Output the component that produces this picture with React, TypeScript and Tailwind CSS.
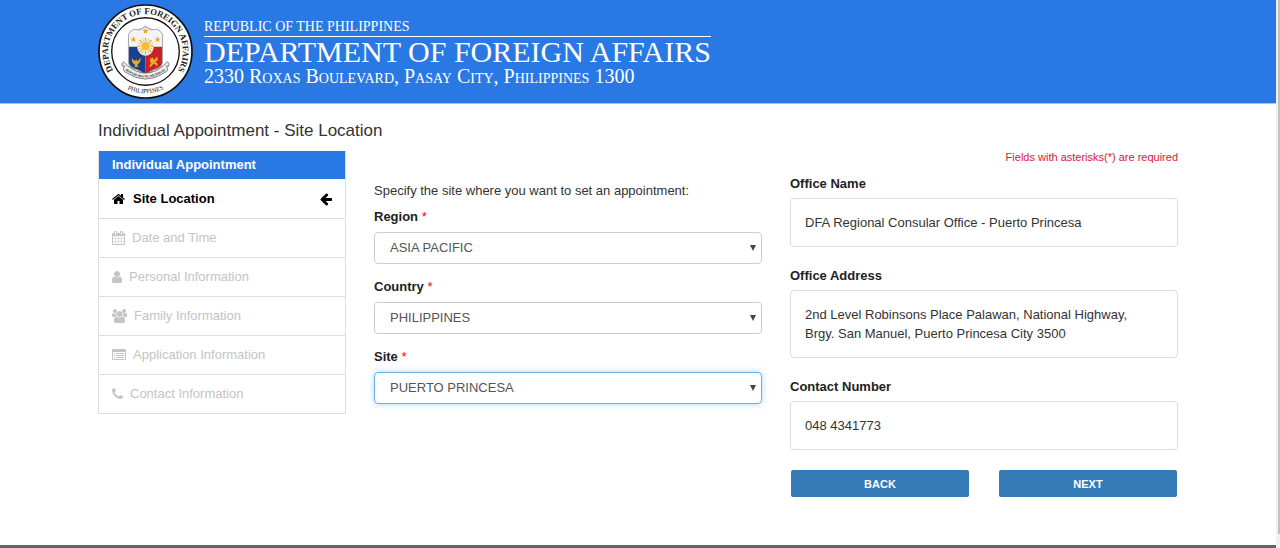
import { useState, type ReactNode } from "react";

type IconProps = { name: keyof typeof glyphs; className?: string };

/* Glyphs on a 1792-unit em: [left, advance width, path] */
const glyphs = {
  home: [64, 1664, "M1472 992v480q0 26-19 45t-45 19h-384v-384h-256v384h-384q-26 0-45-19t-19-45v-480q0-1 .5-3t.5-3l575-474 575 474q1 2 1 6zm223-69l-62 74q-8 9-21 11h-3q-13 0-21-7l-692-577-692 577q-12 8-24 7-13-2-21-11l-62-74q-8-10-7-23.5t11-21.5l719-599q32-26 76-26t76 26l244 204v-195q0-14 9-23t23-9h192q14 0 23 9t9 23v408l219 182q10 8 11 21.5t-7 23.5z"],
  calendar: [64, 1664, "M192 1664h288v-288h-288v288zm352 0h320v-288h-320v288zm-352-352h288v-320h-288v320zm352 0h320v-320h-320v320zm-352-384h288v-288h-288v288zm736 736h320v-288h-320v288zm-384-736h320v-288h-320v288zm768 736h288v-288h-288v288zm-384-352h320v-320h-320v320zm-352-864v-288q0-13-9.5-22.5t-22.5-9.5h-64q-13 0-22.5 9.5t-9.5 22.5v288q0 13 9.5 22.5t22.5 9.5h64q13 0 22.5-9.5t9.5-22.5zm736 864h288v-320h-288v320zm-384-384h320v-288h-320v288zm384 0h288v-288h-288v288zm32-480v-288q0-13-9.5-22.5t-22.5-9.5h-64q-13 0-22.5 9.5t-9.5 22.5v288q0 13 9.5 22.5t22.5 9.5h64q13 0 22.5-9.5t9.5-22.5zm384-64v1280q0 52-38 90t-90 38h-1408q-52 0-90-38t-38-90v-1280q0-52 38-90t90-38h128v-96q0-66 47-113t113-47h64q66 0 113 47t47 113v96h384v-96q0-66 47-113t113-47h64q66 0 113 47t47 113v96h128q52 0 90 38t38 90z"],
  user: [256, 1280, "M1536 1399q0 109-62.5 187t-150.5 78h-854q-88 0-150.5-78t-62.5-187q0-85 8.5-160.5t31.5-152 58.5-131 94-89 134.5-34.5q131 128 313 128t313-128q76 0 134.5 34.5t94 89 58.5 131 31.5 152 8.5 160.5zm-256-887q0 159-112.5 271.5t-271.5 112.5-271.5-112.5-112.5-271.5 112.5-271.5 271.5-112.5 271.5 112.5 112.5 271.5z"],
  users: [-64, 1920, "M529 896q-162 5-265 128h-134q-82 0-138-40.5t-56-118.5q0-353 124-353 6 0 43.5 21t97.5 42.5 119 21.5q67 0 133-23-5 37-5 66 0 159 93 293zm1071 637q0 120-73 189.5t-194 69.5h-874q-121 0-194-69.5t-73-189.5q0-53 3.5-103.5t14-109 26.5-108.5 43-97.5 62-81 85.5-53.5 111.5-20q10 0 43 21.5t73 48 107 48 135 21.5 135-21.5 107-48 73-48 43-21.5q61 0 111.5 20t85.5 53.5 62 81 43 97.5 26.5 108.5 14 109 3.5 103.5zm-1024-1277q0 106-75 181t-181 75-181-75-75-181 75-181 181-75 181 75 75 181zm704 384q0 159-112.5 271.5t-271.5 112.5-271.5-112.5-112.5-271.5 112.5-271.5 271.5-112.5 271.5 112.5 112.5 271.5zm576 225q0 78-56 118.5t-138 40.5h-134q-103-123-265-128 93-134 93-293 0-29-5-66 66 23 133 23 59 0 119-21.5t97.5-42.5 43.5-21q124 0 124 353zm-128-609q0 106-75 181t-181 75-181-75-75-181 75-181 181-75 181 75 75 181z"],
  list: [0, 1792, "M256 1152h128v128h-128zM256 896h128v128h-128zM256 640h128v128h-128zM512 1152h1024v128h-1024zM512 896h1024v128h-1024zM512 640h1024v128h-1024zM1664 1376v-832q0-13-9.5-22.5t-22.5-9.5h-1472q-13 0-22.5 9.5t-9.5 22.5v832q0 13 9.5 22.5t22.5 9.5h1472q13 0 22.5-9.5t9.5-22.5zm128-1088v1088q0 66-47 113t-113 47h-1472q-66 0-113-47t-47-113v-1088q0-66 47-113t113-47h1472q66 0 113 47t47 113z"],
  phone: [192, 1408, "M1600 1240q0 27-10 70.5t-21 68.5q-21 50-122 106-94 51-186 51-27 0-53-3.5t-57.5-12.5-47-14.5-55.5-20.5-49-18q-98-35-175-83-127-79-264-216t-216-264q-48-77-83-175-3-9-18-49t-20.5-55.5-14.5-47-12.5-57.5-3.5-53q0-92 51-186 56-101 106-122 25-11 68.5-21t70.5-10q14 0 21 3 18 6 53 76 11 19 30 54t35 63.5 31 53.5q3 4 17.5 25t21.5 35.5 7 28.5q0 20-28.5 50t-62 55-62 53-28.5 46q0 9 5 22.5t8.5 20.5 14 24 11.5 19q76 137 174 235t235 174q2 1 19 11.5t24 14 20.5 8.5 22.5 5q18 0 46-28.5t53-62 55-62 50-28.5q14 0 28.5 7t35.5 21.5 25 17.5q25 15 53.5 31t63.5 35 54 30q70 35 76 53 3 7 3 21z"],
  arrow: [128, 1600, "M1664 896v128q0 53-32.5 90.5t-84.5 37.5h-704l293 294q38 36 38 90t-38 90l-75 76q-37 37-90 37-52 0-91-37l-651-652q-37-37-37-90 0-52 37-91l651-650q38-38 91-38 52 0 90 38l75 74q38 38 38 91t-38 91l-293 293h704q52 0 84.5 37.5t32.5 90.5z"],
} as const;

function Icon({ name, className = "" }: IconProps) {
  const [left, width, path] = glyphs[name];
  return (
    <svg aria-hidden="true" viewBox={`${left} 0 ${width} 1792`} className={`h-3.5 w-auto shrink-0 fill-current ${className}`}>
      <path d={path} />
    </svg>
  );
}

const STAR = "M0-10 2.4-3.2 9.5-3.1 3.8 1.2 5.9 8.1 0 4-5.9 8.1-3.8 1.2-9.5-3.1-2.4-3.2z";

function Seal() {
  return (
    <svg role="img" aria-label="Seal" viewBox="0 0 284 284" className="size-[95px] shrink-0">
      <defs>
        <path id="seal-top" d="M45.2 197.9A111.8 111.8 0 1 1 238.8 197.9" />
        <path id="seal-bottom" d="M46 222A125 125 0 0 0 238 222" />
        <path id="seal-ribbon" d="M76 194Q142 246 208 194" />
        <clipPath id="shield">
          <path d="M142 66Q158 82 176 75Q190 82 193 92V172Q193 186 178 193Q152 202 142 214Q132 202 106 193Q91 186 91 172V92Q94 82 108 75Q126 82 142 66Z" />
        </clipPath>
      </defs>
      <circle cx="142" cy="142" r="139" fill="#fff" stroke="#111" strokeWidth="5" />
      <circle cx="142" cy="142" r="101" fill="#fff" stroke="#111" strokeWidth="4" />
      <g clipPath="url(#shield)">
        <path fill="#f4f4f6" d="M90 60h104v160H90z" />
        <path fill="#193f91" d="M90 128h52v92H90z" />
        <path fill="#cb2028" d="M142 128h52v92h-52z" />
        <ellipse cx="142" cy="126" rx="25" ry="29" fill="#f4f4f6" />
      </g>
      <path fill="none" stroke="#aaa" strokeWidth="3" d="M142 66Q158 82 176 75Q190 82 193 92V172Q193 186 178 193Q152 202 142 214Q132 202 106 193Q91 186 91 172V92Q94 82 108 75Q126 82 142 66Z" />
      <g stroke="#e9aa20" strokeWidth="4">
        <path d="M142 101v50M117 126h50M124 108l36 36M160 108l-36 36" />
        <path strokeWidth="2" d="M132 103l20 46M152 103l-20 46M119 116l46 20M119 136l46-20" />
      </g>
      <circle cx="142" cy="126" r="14" fill="#f2bd32" stroke="#fff" strokeWidth="2" />
      <g fill="#e9aa20">
        <path d={STAR} transform="translate(142 81)" />
        <path d={STAR} transform="translate(106 106)" />
        <path d={STAR} transform="translate(178 106)" />
        <path d="M101 162q-1 14 8 18l3 5-6 3h16l-5-4 3-5q8-5 7-18l-7 9-3 1-2-6-4 5-3-1z" />
        <path d="M156 163l8-3 4 7 5-4-1-5 7 3-1 8-6 4 7 6-3 8-4-6-7-2-7 9-6-2 7-9-4-5z" />
      </g>
      <path d="M76 173q-8 5-3 13l6-1q-7 16 5 20Q142 244 200 205q12-4 5-20l6 1q5-8-3-13l-12 11Q142 229 88 184z" fill="#eee" stroke="#444" strokeWidth="2" />
      <g fill="#222" fontFamily="Liberation Serif, serif" textAnchor="middle">
        <text fontSize="10" fontWeight="700">
          <textPath href="#seal-ribbon" startOffset="50%">REPUBLIKA NG PILIPINAS</textPath>
        </text>
        <text fontSize="27" fontWeight="700">
          <textPath href="#seal-top" startOffset="50%">
            D<tspan fontSize="26">EPARTMENT OF</tspan> F<tspan fontSize="26">OREIGN</tspan> A<tspan fontSize="26">FFAIRS</tspan>
          </textPath>
        </text>
        <text fontSize="19">
          <textPath href="#seal-bottom" startOffset="50%">PHILIPPINES</textPath>
        </text>
      </g>
    </svg>
  );
}

const steps = [
  { icon: "calendar", label: "Date and Time" },
  { icon: "user", label: "Personal Information" },
  { icon: "users", label: "Family Information" },
  { icon: "list", label: "Application Information" },
  { icon: "phone", label: "Contact Information" },
] as const;

function SelectField({ id, label, value, active, onActivate }: { id: string; label: string; value: string; active: boolean; onActivate: () => void }) {
  return (
    <div className="mb-[13px]">
      <label htmlFor={id} className="mb-[5px] block font-bold text-[#222]">
        {label} <span className="font-normal text-[#f00]">*</span>
      </label>
      <div className="grid items-center">
        <select
          id={id}
          onFocus={onActivate}
          className={`col-start-1 row-start-1 h-8 w-full appearance-none rounded border bg-white px-[15px] text-[#555] outline-none ${
            active ? "border-[#66afe9] shadow-[0_0_6px_rgba(102,175,233,0.5)]" : "border-[#ccc]"
          }`}
        >
          <option>{value}</option>
        </select>
        <svg aria-hidden="true" viewBox="0 0 6 6" className="pointer-events-none col-start-1 row-start-1 mr-1.5 size-1.5 justify-self-end fill-[#444]">
          <path d="M0 0h6L3 6z" />
        </svg>
      </div>
    </div>
  );
}

function Detail({ label, children }: { label: string; children: ReactNode }) {
  return (
    <div className="mb-[19px]">
      <dt className="mb-1 font-bold text-[#222]">{label}</dt>
      <dd className="rounded border border-[#ddd] py-3.5 pr-7 pl-3.5 leading-[19px]">{children}</dd>
    </div>
  );
}

export default function App() {
  const [active, setActive] = useState("site");
  return (
    <div className="flex min-h-screen bg-white font-['Liberation_Sans',Arial,sans-serif] text-[13px] leading-5 text-[#333]">
      <div className="flex min-w-0 flex-1 flex-col">
        <header className="border-b border-[#9fc4f5] bg-[#2a78e4] px-4">
          <div className="mx-auto flex h-[103px] max-w-[1080px] items-center gap-[11px] font-['Liberation_Serif','Times_New_Roman',serif] text-white">
            <Seal />
            <div>
              <p className="text-[14px] leading-[18px]">REPUBLIC OF THE PHILIPPINES</p>
              <p className="border-t border-white text-[30px] leading-[30px]">DEPARTMENT OF FOREIGN AFFAIRS</p>
              <p className="text-[20px] leading-[18px] [font-variant-caps:small-caps]">2330 Roxas Boulevard, Pasay City, Philippines 1300</p>
            </div>
          </div>
        </header>

        <main className="mx-auto w-full max-w-[1080px] flex-1 pt-[17px] pb-10">
          <h1 className="mb-2.5 text-[17px] leading-5">Individual Appointment - Site Location</h1>
          <div className="grid grid-cols-[248fr_388fr_388fr] items-start gap-7">
            <nav aria-label="Steps" className="border border-t-0 border-[#ddd]">
              <h2 className="bg-[#2a78e4] px-[13px] py-1 text-[13px] font-bold text-white">Individual Appointment</h2>
              <ul>
                <li>
                  <a href="#site" className="flex h-[39px] items-center gap-2 px-[13px] font-bold text-black">
                    <Icon name="home" />
                    Site Location
                    <Icon name="arrow" className="ml-auto" />
                  </a>
                </li>
                {steps.map((s) => (
                  <li key={s.label} className="border-t border-[#ddd]">
                    <a href="#step" className="flex h-[38px] items-center gap-[7px] px-[13px] text-[#c4c4c4]">
                      <Icon name={s.icon} />
                      {s.label}
                    </a>
                  </li>
                ))}
              </ul>
            </nav>

            <form className="pt-[30px]">
              <p className="mb-1.5">Specify the site where you want to set an appointment:</p>
              <SelectField id="region" label="Region" value="ASIA PACIFIC" active={active === "region"} onActivate={() => setActive("region")} />
              <SelectField id="country" label="Country" value="PHILIPPINES" active={active === "country"} onActivate={() => setActive("country")} />
              <SelectField id="site" label="Site" value="PUERTO PRINCESA" active={active === "site"} onActivate={() => setActive("site")} />
            </form>

            <section>
              <p className="mb-[11px] text-right text-[11px] leading-3 text-[#dc143c]">Fields with asterisks(*) are required</p>
              <dl>
                <Detail label="Office Name">DFA Regional Consular Office - Puerto Princesa</Detail>
                <Detail label="Office Address">
                  2nd Level Robinsons Place Palawan, National Highway, Brgy. San Manuel, Puerto Princesa City 3500
                </Detail>
                <Detail label="Contact Number">048 4341773</Detail>
              </dl>
              <div className="grid grid-cols-2 gap-[30px] p-px text-[11px] font-bold text-white">
                <button type="button" className="h-[27px] rounded-xs bg-[#337ab7]">BACK</button>
                <button type="button" className="h-[27px] rounded-xs bg-[#337ab7]">NEXT</button>
              </div>
            </section>
          </div>
        </main>
        <footer className="h-[3px] bg-[#666]" />
      </div>
      <div aria-hidden="true" className="w-1 bg-[#f1f1f1] pb-3.5 pl-0.5">
        <div className="h-full bg-[#c1c1c1]" />
      </div>
    </div>
  );
}
